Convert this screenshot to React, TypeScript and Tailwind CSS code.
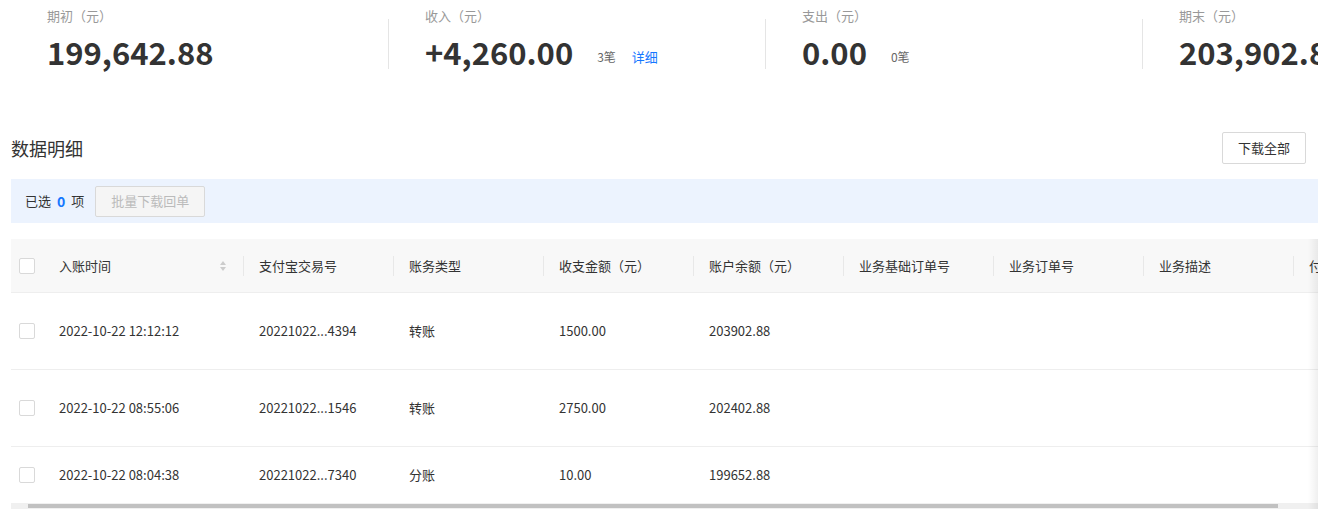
const font = { fontFamily: '"Noto Sans CJK SC", "Liberation Sans", sans-serif' }

const stats = [
  { label: '期初（元）', value: '199,642.88' },
  { label: '收入（元）', value: '+4,260.00', count: '3笔', link: '详细' },
  { label: '支出（元）', value: '0.00', count: '0笔' },
  { label: '期末（元）', value: '203,902.88' },
]

const cols = ['支付宝交易号', '账务类型', '收支金额（元）', '账户余额（元）', '业务基础订单号', '业务订单号', '业务描述', '付款方']

const rows = [
  { time: '2022-10-22 12:12:12', no: '20221022...4394', type: '转账', amt: '1500.00', bal: '203902.88', h: 'h-[77px]' },
  { time: '2022-10-22 08:55:06', no: '20221022...1546', type: '转账', amt: '2750.00', bal: '202402.88', h: 'h-[77px]' },
  { time: '2022-10-22 08:04:38', no: '20221022...7340', type: '分账', amt: '10.00', bal: '199652.88', h: 'h-[57px]' },
]

function Box() {
  return <span className="block w-4 h-4 border border-[#d9d9d9] rounded-[2px] bg-white" />
}

export default function App() {
  return (
    <div className="w-[1318px] h-[511px] overflow-hidden bg-white text-[#333]" style={font}>
      {/* summary */}
      <div className="flex pl-[11px] h-[69px]">
        {stats.map((s, i) => (
          <div key={i} className={'w-[377px] shrink-0 pl-[36px] whitespace-nowrap ' + (i > 0 ? 'border-l border-[#e5e5e5] mt-[19px] h-[50px]' : '')}>
            <div className={'text-[13px] text-[#999] leading-[16px] ' + (i > 0 ? '-mt-[11px]' : 'mt-[8px]')}>{s.label}</div>
            <div className="flex items-end mt-[12px]">
              <span className="text-[31px] font-bold leading-[32px] text-[#333]">{s.value}</span>
              {s.count && <span className="ml-[24px] text-[12px] text-[#666] mb-[2px]">{s.count}</span>}
              {s.link && <span className="ml-[16px] text-[13px] text-[#1677ff] mb-[2px]">{s.link}</span>}
            </div>
          </div>
        ))}
      </div>

      {/* title */}
      <div className="flex items-center justify-between pl-[11px] pr-[12px] mt-[63px]">
        <span className="text-[18px] text-[#333]">数据明细</span>
        <button className="h-[32px] px-[15px] border border-[#d9d9d9] rounded-[2px] text-[13px] text-[#333] bg-white">下载全部</button>
      </div>

      {/* selection bar */}
      <div className="ml-[11px] mt-[15px] h-[44px] bg-[#ecf3fe] flex items-center pl-[14px] text-[13px]">
        已选 <span className="mx-[6px] text-[#1677ff] font-bold text-[14px]">0</span> 项
        <button className="ml-[11px] h-[31px] px-[15px] border border-[#d9d9d9] bg-[#f5f5f5] text-[#bbb] rounded-[2px]">批量下载回单</button>
      </div>

      {/* table */}
      <div className="ml-[11px] mt-[16px] relative text-[13px]">
        <div className="flex h-[54px] bg-[#f8f8f8] border-b border-[#eee] items-center">
          <div className="w-[37px] shrink-0 pl-[8px]"><Box /></div>
          <div className="w-[195px] shrink-0 flex items-center pl-[11px] pr-[16px] justify-between whitespace-nowrap">
            入账时间
            <svg width="8" height="12" viewBox="0 0 8 12"><path d="M4 1 7 5H1z" fill="#ccc" /><path d="M4 11 7 7H1z" fill="#ccc" /></svg>
          </div>
          {cols.map((c, i) => (
            <div key={i} className="w-[150px] shrink-0 flex items-center">
              <span className="w-px h-[20px] bg-[#e8e8e8]" />
              <span className="pl-[15px] whitespace-nowrap">{c}</span>
            </div>
          ))}
        </div>
        {rows.map((r, i) => (
          <div key={i} className={'flex items-center border-b border-[#eee] ' + r.h}>
            <div className="w-[37px] shrink-0 pl-[8px]"><Box /></div>
            <div className="w-[195px] shrink-0 pl-[11px]">{r.time}</div>
            <div className="w-[150px] shrink-0 pl-[16px]">{r.no}</div>
            <div className="w-[150px] shrink-0 pl-[16px]">{r.type}</div>
            <div className="w-[150px] shrink-0 pl-[16px]">{r.amt}</div>
            <div className="w-[150px] shrink-0 pl-[16px]">{r.bal}</div>
          </div>
        ))}
        <div className="absolute right-0 top-0 bottom-0 w-[10px] bg-gradient-to-r from-transparent to-[#00000010]" />
        <div className="h-[6px] bg-[#f0f0f0] -mt-px flex"><div className="ml-[17px] w-[1250px] h-[4px] mt-[1px] bg-[#c1c1c1]" /></div>
      </div>
    </div>
  )
}
